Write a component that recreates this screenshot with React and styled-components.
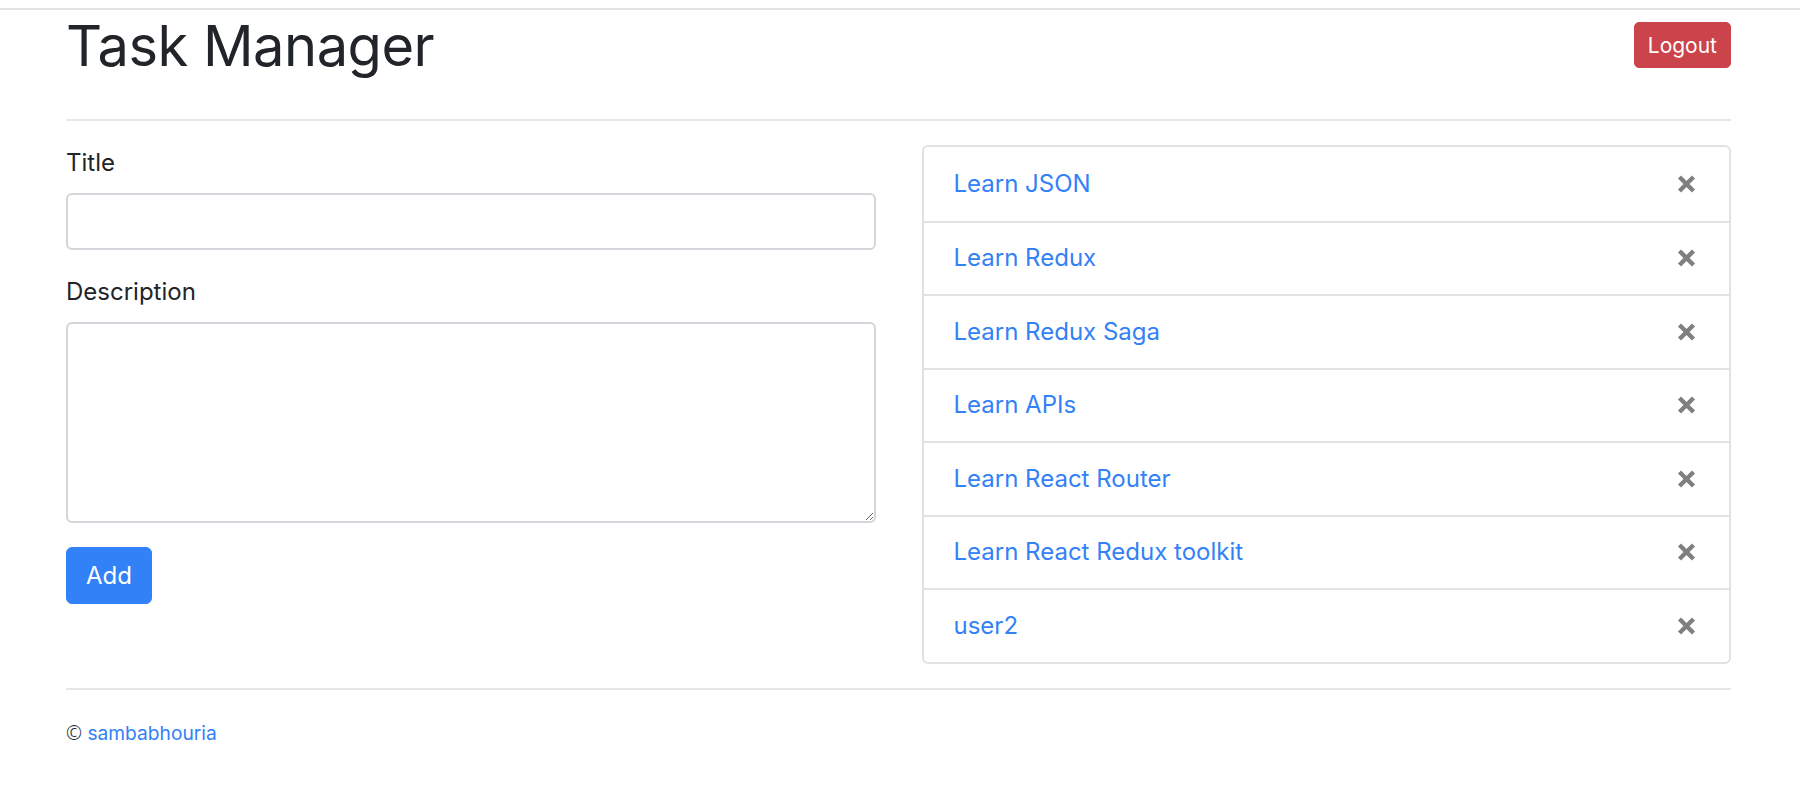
import React from "react";
import styled, { createGlobalStyle } from "styled-components";

const tasks = [
  "Learn JSON",
  "Learn Redux",
  "Learn Redux Saga",
  "Learn APIs",
  "Learn React Router",
  "Learn React Redux toolkit",
  "user2",
];

const GlobalStyle = createGlobalStyle`
  * {
    box-sizing: border-box;
  }

  body {
    margin: 0;
    background: #fff;
    color: #212529;
    font-family: Inter, "Noto Sans", sans-serif;
    font-size: 24px;
    line-height: 1.5;
  }
`;

const App = () => {
  return (
    <>
      <GlobalStyle />
      <Page>
        <Container>
          <Header>
            <Heading>Task Manager</Heading>
            <Button variant="danger" size="sm">
              Logout
            </Button>
          </Header>
          <Divider />
          <Row>
            <Form onSubmit={(e) => e.preventDefault()}>
              <FormGroup>
                <Label htmlFor="title">Title</Label>
                <Input id="title" type="text" />
              </FormGroup>
              <FormGroup>
                <Label htmlFor="description">Description</Label>
                <TextArea id="description" rows={5} />
              </FormGroup>
              <div>
                <Button variant="primary" type="submit">
                  Add
                </Button>
              </div>
            </Form>
            <ListGroup>
              {tasks.map((task, index) => (
                <ListItem key={index}>
                  <TaskLink href="#">{task}</TaskLink>
                  <CloseButton type="button" aria-label="Close">
                    <svg width="19" height="18" viewBox="0 0 19 18">
                      <path
                        d="M2.5 2 L16.5 16 M16.5 2 L2.5 16"
                        stroke="currentColor"
                        strokeWidth="4.4"
                      />
                    </svg>
                  </CloseButton>
                </ListItem>
              ))}
            </ListGroup>
          </Row>
          <Divider />
          <Footer>
            <small>
              <Copy>©</Copy> <FooterLink href="#">sambabhouria</FooterLink>
            </small>
          </Footer>
        </Container>
      </Page>
    </>
  );
};

const Page = styled.div`
  margin-top: 8px;
  border-top: 2px solid #e2e2e2;
  min-height: 796px;
`;

const Container = styled.div`
  width: 1665px;
  margin-left: 66px;
`;

const Header = styled.div`
  display: flex;
  justify-content: space-between;
  align-items: flex-start;
  margin-bottom: 37px;
`;

const Heading = styled.h1`
  margin: 0;
  font-size: 56px;
  font-weight: 400;
  line-height: 72px;
  letter-spacing: -0.5px;
  color: #212529;
`;

const Divider = styled.hr`
  margin: 24px 0;
  border: 0;
  border-top: 2px solid #e6e6e6;
  height: 0;
`;

const Row = styled.div`
  display: grid;
  grid-template-columns: 1fr 1fr;
  column-gap: 46px;
  align-items: start;
`;

const Form = styled.form`
  display: flex;
  flex-direction: column;
`;

const FormGroup = styled.div`
  margin-bottom: 24px;
`;

const Label = styled.label`
  display: inline-block;
  margin-bottom: 12px;
`;

const fieldStyle = `
  display: block;
  width: 100%;
  padding: 9px 18px;
  font-family: Inter, "Noto Sans", sans-serif;
  font-size: 24px;
  line-height: 1.5;
  color: #495057;
  background: #fff;
  border: 2px solid #d2d6da;
  border-radius: 6px;
  outline: none;
`;

const Input = styled.input`
  ${fieldStyle}
  height: 57px;
`;

const TextArea = styled.textarea`
  ${fieldStyle}
  height: 201px;
  resize: vertical;
`;

const variants = {
  primary: "#3381f6",
  danger: "#cb444b",
};

const Button = styled.button`
  display: inline-block;
  font-family: Inter, "Noto Sans", sans-serif;
  font-weight: 400;
  color: #fff;
  background: ${({ variant }) => variants[variant]};
  border: 1.5px solid ${({ variant }) => variants[variant]};
  cursor: pointer;
  ${({ size }) =>
    size === "sm"
      ? `
    margin-top: 12px;
    padding: 5px 13px;
    font-size: 21px;
    line-height: 33px;
    border-radius: 5px;
    height: 46px;
  `
      : `
    padding: 9px 19px;
    font-size: 24px;
    line-height: 36px;
    border-radius: 6px;
    height: 57px;
  `}
`;

const ListGroup = styled.ul`
  list-style: none;
  margin: 0;
  padding: 0;
  border: 2px solid #e2e2e2;
  border-radius: 6px;
`;

const ListItem = styled.li`
  display: flex;
  justify-content: space-between;
  align-items: center;
  padding: 0 30px;
  line-height: 36px;
  height: 73.5px;

  & + & {
    border-top: 2px solid #e2e2e2;
  }
`;

const TaskLink = styled.a`
  color: #3381f6;
  text-decoration: none;
`;

const CloseButton = styled.button`
  display: flex;
  align-items: center;
  padding: 0;
  margin-right: 3px;
  background: transparent;
  border: 0;
  color: #7f7f7f;
  cursor: pointer;
`;

const Footer = styled.p`
  margin: 0;
  line-height: 36px;

  small {
    font-size: 19.2px;
  }
`;

const Copy = styled.span`
  font-family: "Noto Sans", sans-serif;
  font-weight: 300;
`;

const FooterLink = styled.a`
  color: #3381f6;
  text-decoration: none;
`;

export default App;
